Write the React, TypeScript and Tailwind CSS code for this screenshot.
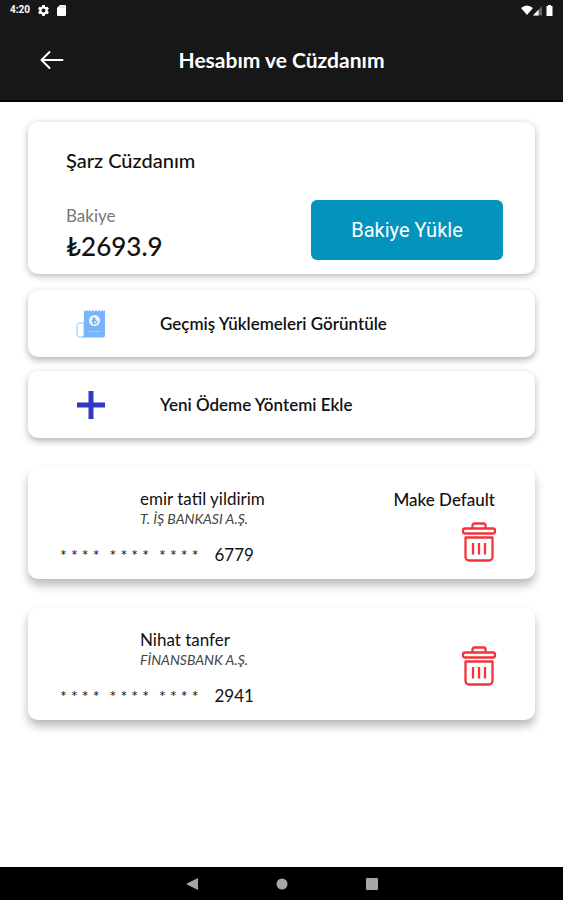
import React from 'react';

interface SavedCard {
  id: number;
  holder: string;
  bank: string;
  lastDigits: string;
  canMakeDefault: boolean;
}

const savedCards: SavedCard[] = [
  { id: 1, holder: 'emir tatil yildirim', bank: 'T. İŞ BANKASI A.Ş.', lastDigits: '6779', canMakeDefault: true },
  { id: 2, holder: 'Nihat tanfer', bank: 'FİNANSBANK A.Ş.', lastDigits: '2941', canMakeDefault: false },
];

const ReceiptIcon: React.FC = () => (
  <svg width="30" height="30" viewBox="0 0 30 30" aria-hidden="true">
    <path d="M8 1l1.500 1.500L11 1l1.500 1.500L14 1l1.500 1.500L17 1l1.500 1.500L20 1l1.500 1.500L23 1l1.500 1.500L26 1l1.500 1.500L29 1v25a2.500 2.500 0 0 1-2.500 2.500H6V14h2z" fill="#76b5fb" />
    <path d="M8 14H3.500A2.500 2.500 0 0 0 1 16.500V25a3 3 0 0 0 3.500 3H6a2 2 0 0 0 2-2z" fill="#fff" stroke="#8fc4fc" strokeWidth="1" />
    <circle cx="18.500" cy="11.500" r="5.500" fill="#eef7ff" />
    <path d="M17.500 8v7c2.200 0 3.700-1.200 3.700-3.200M15.800 11.500l4.200-2M15.800 13.300l4.200-2" fill="none" stroke="#65a8ef" strokeWidth="1.200" />
    <path d="M12 22.500h13" stroke="#9fcbfb" strokeWidth="1" />
  </svg>
);

const PlusIcon: React.FC = () => (
  <svg width="30" height="30" viewBox="0 0 30 30" aria-hidden="true">
    <path d="M12.500 1h5v11.500H29v5H17.500V29h-5V17.500H1v-5h11.500z" fill="#3039c4" />
  </svg>
);

const TrashIcon: React.FC = () => (
  <svg width="36" height="40" viewBox="0 0 36 40" fill="none" stroke="#f2353a" strokeWidth="2.300" strokeLinejoin="round" aria-hidden="true">
    <path d="M11.500 6V3.500a2 2 0 0 1 2-2h9a2 2 0 0 1 2 2V6" />
    <rect x="2" y="6.500" width="32" height="5" rx="2" />
    <path d="M4.500 15.500h27v19.500a3.500 3.500 0 0 1-3.500 3.500h-20A3.500 3.500 0 0 1 4.500 35z" />
    <path d="M12 21v11.500M18 21v11.500M24 21v11.500" />
  </svg>
);

const StatusBar: React.FC = () => (
  <div className="flex items-center justify-between px-2.5 h-5 text-white">
    <div className="flex items-center gap-2">
      <span className="text-[10px] leading-4 font-bold font-['Roboto',sans-serif]">4:20</span>
      <svg width="11" height="11" viewBox="0 0 22 22" aria-hidden="true">
        <path fillRule="evenodd" fill="#fff" d="M8.500 0h5l.7 3.200 2 1.100 3.100-1 2.500 4.300-2.400 2.200v2.400l2.400 2.200-2.500 4.300-3.100-1-2 1.100-.7 3.200h-5l-.7-3.200-2-1.100-3.100 1L.2 14.400l2.400-2.200V9.800L.2 7.600l2.500-4.300 3.100 1 2-1.100zM11 7a4 4 0 1 0 0 8 4 4 0 0 0 0-8z" />
      </svg>
      <svg width="9" height="11" viewBox="0 0 18 22" aria-hidden="true">
        <path d="M6 0h10a2 2 0 0 1 2 2v18a2 2 0 0 1-2 2H2a2 2 0 0 1-2-2V6z" fill="#fff" />
        <path d="M7 3v3M10.500 3v3M14 3v3" stroke="#888" strokeWidth="1" />
      </svg>
    </div>
    <div className="flex items-center gap-1">
      <svg width="21" height="11" viewBox="0 0 21 11" aria-hidden="true">
        <path d="M0 3Q6-2 12 3L6 10z" fill="#fff" />
        <path d="M21 1v9.500h-9z" fill="#666" />
        <path d="M17.500 4.700v5.800H12z" fill="#fff" />
      </svg>
      <svg width="7" height="11" viewBox="0 0 7 11" aria-hidden="true">
        <path d="M2 0h3v1h1.500v10h-6V1H2z" fill="#fff" />
      </svg>
    </div>
  </div>
);

const SavedCardItem: React.FC<{ card: SavedCard }> = ({ card }) => (
  <li className="flex justify-between h-28 pl-8 pr-9 bg-white rounded-[10px] shadow-[0_6px_10px_rgba(0,0,0,0.28)]">
    <div className="pt-5">
      <div className="pl-20">
        <p className="text-[17px] leading-6">{card.holder}</p>
        <p className="text-sm leading-4 italic text-[#444]">{card.bank}</p>
      </div>
      <div className="flex items-center gap-2.5 pt-4 leading-6">
        <span className="text-base">* * * *</span>
        <span className="text-base">* * * *</span>
        <span className="text-base">* * * *</span>
        <span className="pl-1.5 text-[17px]">{card.lastDigits}</span>
      </div>
    </div>
    <div className="flex flex-col items-end justify-center gap-2.5 pt-1">
      {card.canMakeDefault && (
        <button type="button" className="pr-1 text-[17px] leading-6 font-medium">Make Default</button>
      )}
      <button type="button" aria-label="Sil" className="pr-0.5">
        <TrashIcon />
      </button>
    </div>
  </li>
);

const App: React.FC = () => {
  return (
    <div className="min-h-screen flex flex-col bg-white text-[#111] font-['Lato',sans-serif]">
      <header className="bg-[#171717] border-b-2 border-black">
        <StatusBar />
        <div className="grid grid-cols-[1fr_auto_1fr] items-center px-10 h-20">
          <button type="button" aria-label="Geri" className="justify-self-start">
            <svg width="24" height="20" viewBox="0 0 24 20" fill="none" stroke="#fff" strokeWidth="2" strokeLinecap="round" strokeLinejoin="round" aria-hidden="true">
              <path d="M22.500 10H1.500M9.500 2L1.500 10l8 8" />
            </svg>
          </button>
          <h1 className="text-[21px] leading-7 font-bold text-white">Hesabım ve Cüzdanım</h1>
        </div>
      </header>

      <main className="flex-1 px-7 pt-5 pb-8">
        {/* Wallet */}
        <section className="pl-[38px] pr-8 pt-6 pb-3.5 bg-white rounded-[10px] shadow-[0_2px_7px_rgba(0,0,0,0.3)]">
          <h2 className="text-xl leading-7 font-medium">Şarz Cüzdanım</h2>
          <div className="flex items-end justify-between pt-[26px]">
            <div>
              <p className="text-[17px] leading-8 text-[#777]">Bakiye</p>
              <p className="text-[26px] leading-7 font-medium">₺2693.9</p>
            </div>
            <button type="button" className="w-48 h-15 rounded-md bg-[#0394bd] text-xl text-white font-['Roboto',sans-serif]">
              Bakiye Yükle
            </button>
          </div>
        </section>

        <nav className="flex flex-col gap-3.5 pt-4">
          <a href="#gecmis" className="flex items-center gap-[54px] h-[67px] pl-12 bg-white rounded-[10px] shadow-[0_3px_7px_rgba(0,0,0,0.3)]">
            <ReceiptIcon />
            <span className="text-[17px] leading-6 font-semibold">Geçmiş Yüklemeleri Görüntüle</span>
          </a>
          <a href="#odeme" className="flex items-center gap-[54px] h-[67px] pl-12 bg-white rounded-[10px] shadow-[0_3px_7px_rgba(0,0,0,0.3)]">
            <PlusIcon />
            <span className="text-[17px] leading-6 font-semibold">Yeni Ödeme Yöntemi Ekle</span>
          </a>
        </nav>

        {/* Saved cards */}
        <ul className="flex flex-col gap-[29px] pt-[29px]">
          {savedCards.map(card => (
            <SavedCardItem key={card.id} card={card} />
          ))}
        </ul>
      </main>

      <footer className="flex items-center justify-center gap-[78px] h-[33px] bg-black">
        <button type="button" aria-label="Geri">
          <svg width="12" height="12" viewBox="0 0 12 12" aria-hidden="true"><path d="M12 0v12L0 6z" fill="#a6a6a6" /></svg>
        </button>
        <button type="button" aria-label="Ana ekran">
          <svg width="12" height="12" viewBox="0 0 12 12" aria-hidden="true"><circle cx="6" cy="6" r="5.500" fill="#a6a6a6" /></svg>
        </button>
        <button type="button" aria-label="Son uygulamalar">
          <svg width="12" height="12" viewBox="0 0 12 12" aria-hidden="true"><rect width="12" height="12" rx="1" fill="#a6a6a6" /></svg>
        </button>
      </footer>
    </div>
  );
};

export default App;
